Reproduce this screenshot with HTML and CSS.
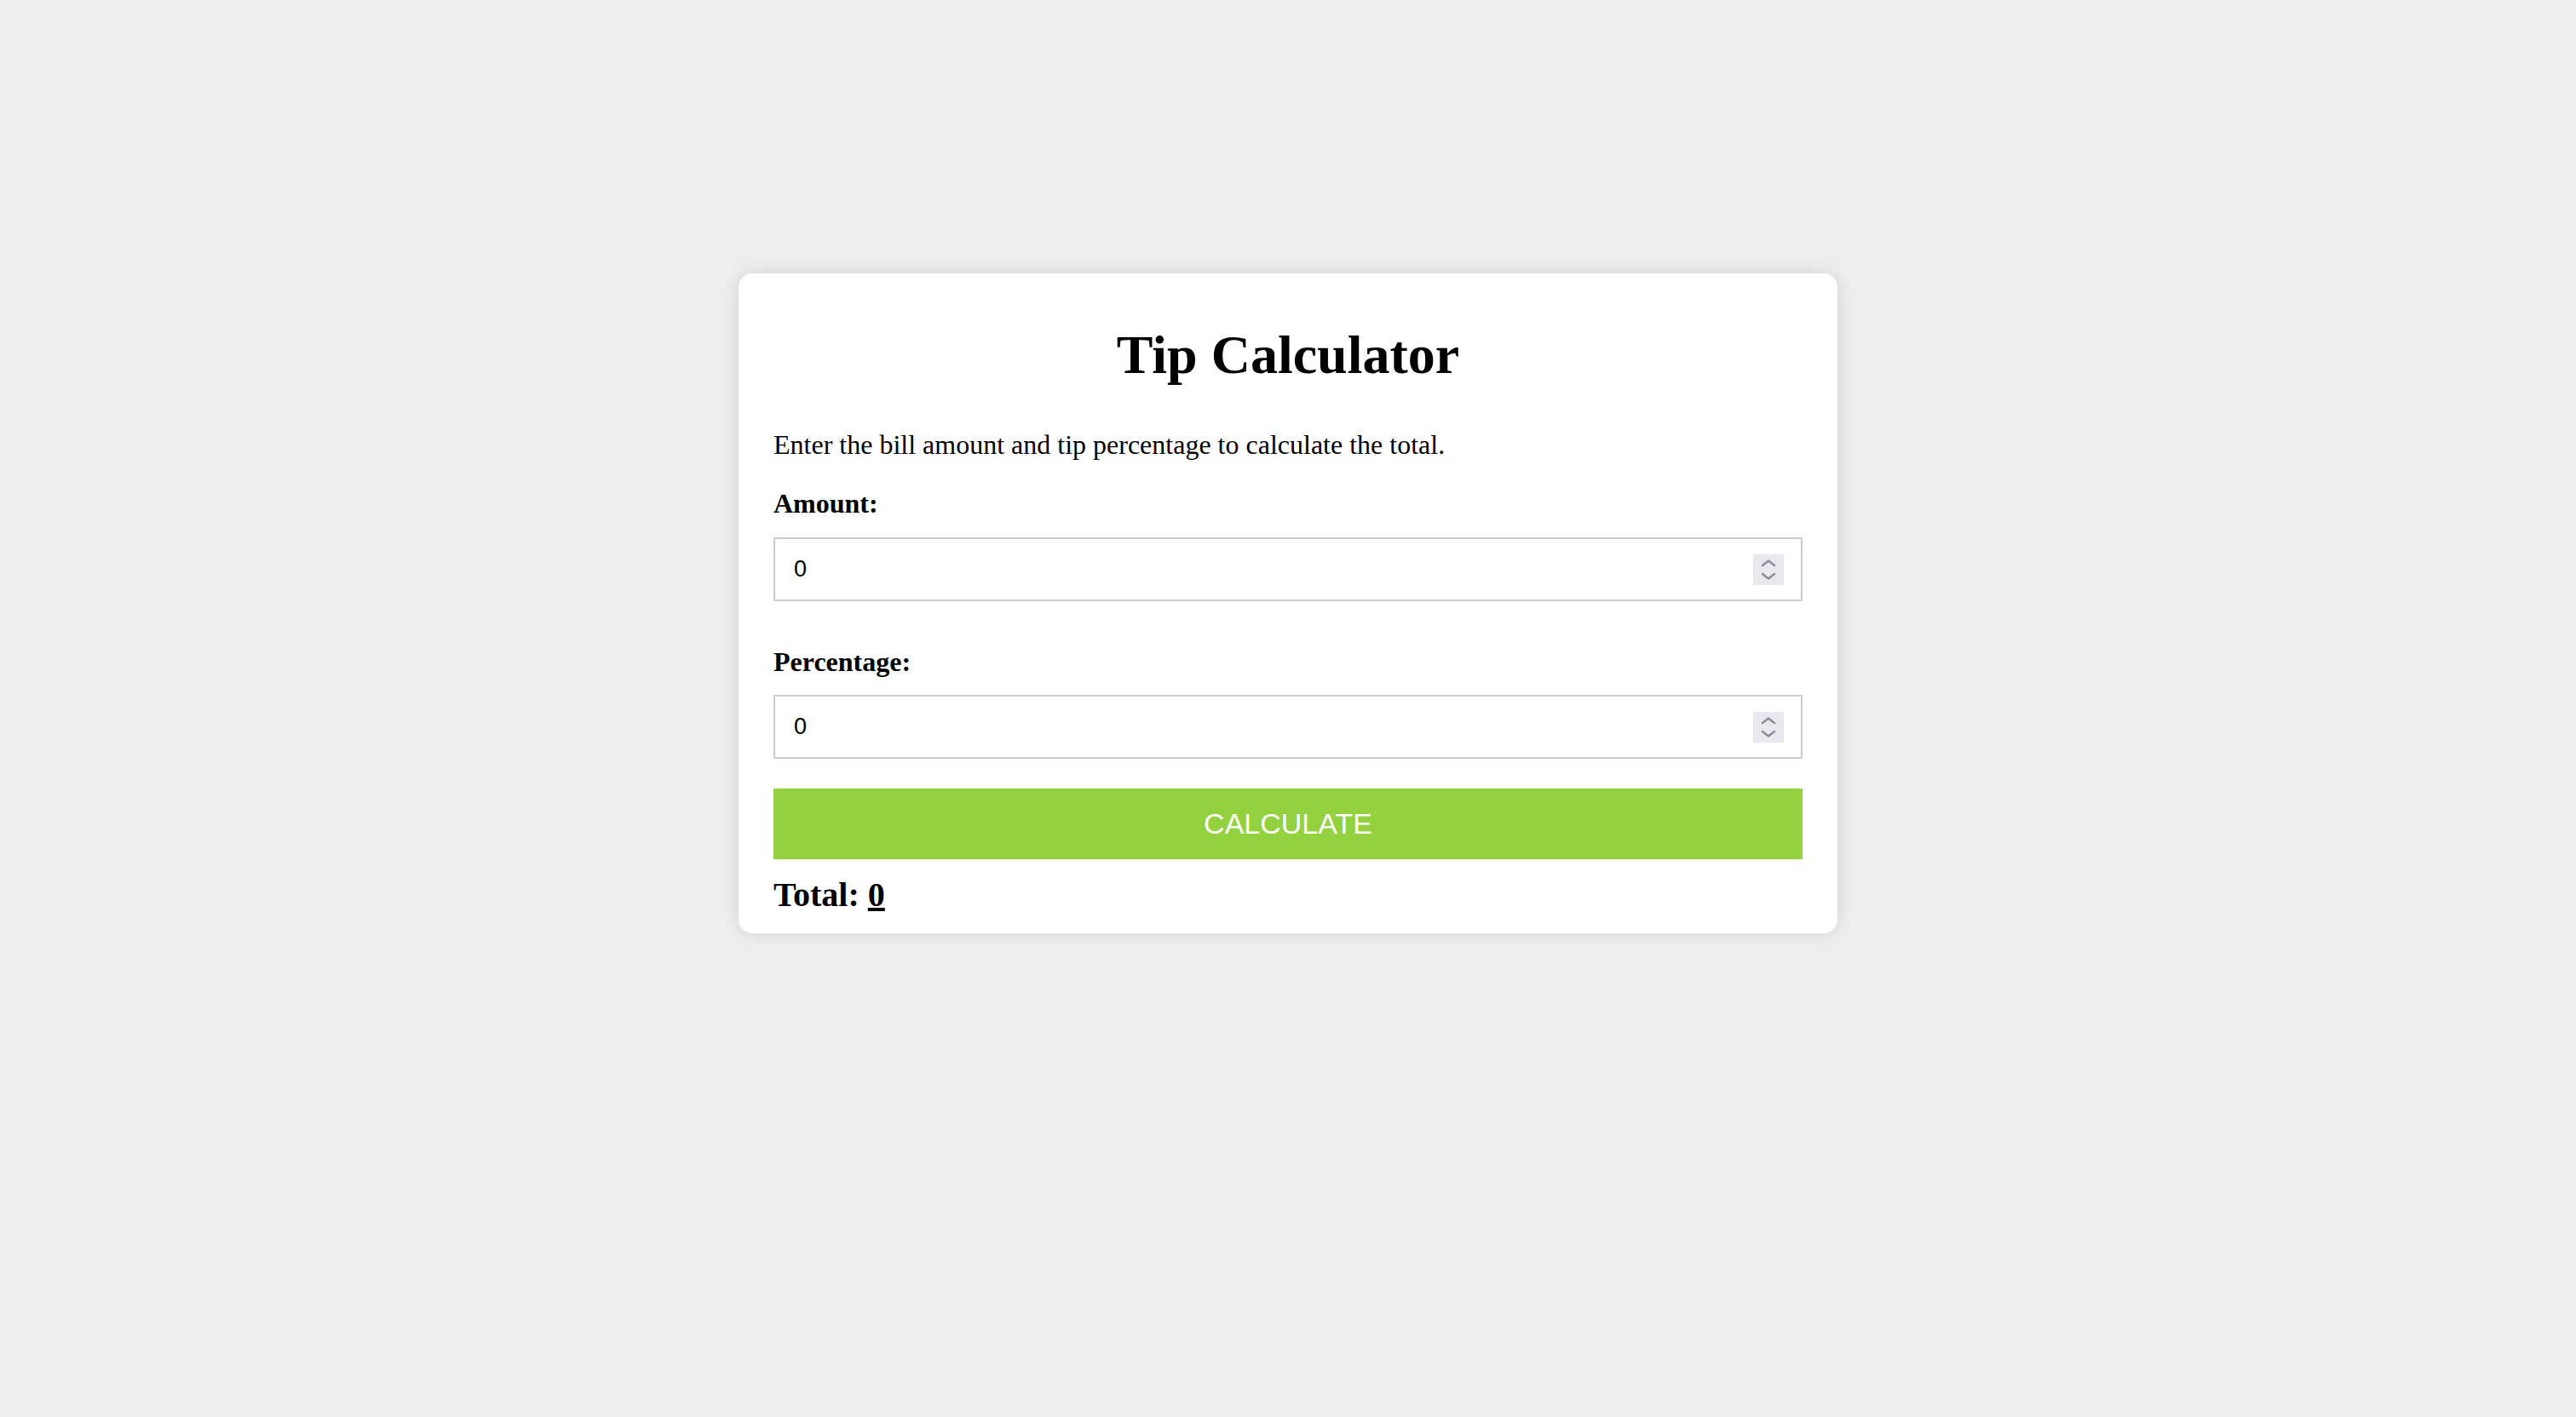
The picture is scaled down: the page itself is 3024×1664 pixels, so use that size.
FILE: index.html
```html
<!DOCTYPE html>
<html lang="en">
<head>
<meta charset="utf-8">
<title>Tip Calculator</title>
<link rel="stylesheet" href="styles.css">
</head>
<body>
  <main class="card">
    <h1 class="title">Tip Calculator</h1>
    <p class="intro">Enter the bill amount and tip percentage to calculate the total.</p>

    <label class="label label-first" for="amount">Amount:</label>
    <div class="field field-first">
      <input class="field-input" id="amount" type="text" inputmode="decimal" value="0">
      <span class="spinner" aria-hidden="true">
        <svg width="36" height="36" viewBox="0 0 36 36">
          <path d="M11 13 L18 7.5 L25 13" fill="none" stroke="#8e8e9b" stroke-width="2.6" stroke-linecap="round" stroke-linejoin="round"/>
          <path d="M11 23 L18 28.5 L25 23" fill="none" stroke="#8e8e9b" stroke-width="2.6" stroke-linecap="round" stroke-linejoin="round"/>
        </svg>
      </span>
    </div>

    <label class="label label-second" for="percentage">Percentage:</label>
    <div class="field field-second">
      <input class="field-input" id="percentage" type="text" inputmode="decimal" value="0">
      <span class="spinner" aria-hidden="true">
        <svg width="36" height="36" viewBox="0 0 36 36">
          <path d="M11 13 L18 7.5 L25 13" fill="none" stroke="#8e8e9b" stroke-width="2.6" stroke-linecap="round" stroke-linejoin="round"/>
          <path d="M11 23 L18 28.5 L25 23" fill="none" stroke="#8e8e9b" stroke-width="2.6" stroke-linecap="round" stroke-linejoin="round"/>
        </svg>
      </span>
    </div>

    <button class="calc-btn" type="button">CALCULATE</button>

    <h3 class="total">Total: <span class="total-value">0</span></h3>
  </main>
</body>
</html>
```

FILE: styles.css
```css
html, body {
  margin: 0;
  padding: 0;
}

body {
  background: #eeeeee;
  font-family: "Liberation Serif", "Times New Roman", serif;
  color: #000;
  min-height: 1664px;
  padding-top: 321px;
  box-sizing: border-box;
}

.card {
  width: 1290px;
  box-sizing: border-box;
  margin: 0 auto;
  background: #ffffff;
  border-radius: 16px;
  box-shadow: 0 0 20px rgba(0, 0, 0, 0.12);
  padding: 59px 41px 24px 41px;
  display: flex;
  flex-direction: column;
}

.title {
  margin: 0;
  font-size: 64px;
  line-height: 74px;
  font-weight: bold;
  text-align: center;
}

.intro {
  margin: 50px 0 0;
  font-size: 32px;
  line-height: 37px;
}

.label {
  display: block;
  font-size: 32px;
  line-height: 37px;
  font-weight: bold;
}

.label-first {
  margin-top: 32px;
}

.label-second {
  margin-top: 53px;
}

.field {
  height: 75px;
  box-sizing: border-box;
  border: 2px solid #cccccc;
  background: #fff;
  display: flex;
  align-items: center;
  padding: 0 20px 0 22px;
}

.field-first {
  margin-top: 21px;
}

.field-second {
  margin-top: 20px;
}

.field-input {
  flex: 1;
  min-width: 0;
  border: none;
  outline: none;
  padding: 0;
  margin: 0;
  background: transparent;
  font-family: "Liberation Sans", Arial, sans-serif;
  font-size: 27px;
  color: #000;
}

.spinner {
  width: 36px;
  height: 36px;
  background: #e9e9ed;
  display: flex;
  align-items: center;
  justify-content: center;
}

.spinner svg {
  display: block;
}

.calc-btn {
  margin-top: 35px;
  height: 83px;
  border: none;
  background: #94d13f;
  color: #ffffff;
  font-family: "Liberation Sans", Arial, sans-serif;
  font-size: 34px;
  font-weight: normal;
  padding: 0;
  cursor: pointer;
}

.total {
  margin: 20px 0 0;
  font-size: 40px;
  line-height: 43px;
  font-weight: bold;
}

.total-value {
  text-decoration: underline;
}
```
